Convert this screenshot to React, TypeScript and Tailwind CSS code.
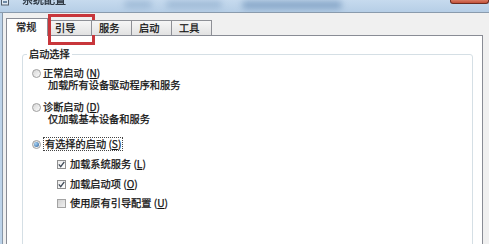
import React from "react";

const tabs = [
  { label: "常规", w: "w-[42px]" },
  { label: "引导", w: "w-[45px]" },
  { label: "服务", w: "w-[41px]" },
  { label: "启动", w: "w-[41px]" },
  { label: "工具", w: "w-[41px]" },
];

function Radio({ checked }: { checked?: boolean }) {
  return (
    <span className="flex h-[9px] w-[9px] shrink-0 items-center justify-center rounded-full border border-[#a0a0a0] bg-linear-to-br from-[#d6d6d6] to-[#fbfbfb]">
      {checked && (
        <span className="h-[5px] w-[5px] rounded-full bg-[radial-gradient(circle_at_35%_35%,#a8d4f6,#2a5e98)]" />
      )}
    </span>
  );
}

function Check({ checked }: { checked?: boolean }) {
  return (
    <span
      className={
        checked
          ? "flex h-[9px] w-[9px] shrink-0 items-center justify-center border border-[#8f8f8f] bg-linear-to-br from-[#ececec] to-white"
          : "flex h-[9px] w-[9px] shrink-0 border border-[#a3a3a3] bg-linear-to-br from-[#d2d2d2] to-[#f0f0f0]"
      }
    >
      {checked && (
        <svg width="7" height="7" viewBox="0 0 7 7">
          <path d="M0.8 3.4 L2.7 5.6 L6.3 0.9" fill="none" stroke="#3f4a57" strokeWidth="1.3" />
        </svg>
      )}
    </span>
  );
}

export default function App() {
  return (
    <div className="flex h-[244px] w-[489px] flex-col overflow-hidden bg-[#f0f0f0] font-['Noto_Sans_CJK_SC','Liberation_Sans',sans-serif] text-[10.2px] text-[#111] [-webkit-text-stroke:0.25px_#111]">
      {/* title bar */}
      <div className="flex h-[13px] shrink-0 items-start overflow-hidden border-b border-[#8a9bad] bg-linear-to-b from-[#c6daee] to-[#b6cee6]">
        <svg width="9" height="6" viewBox="0 0 9 6" className="ml-[1px] shrink-0">
          <rect x="0.5" y="-3" width="7" height="8" fill="#dfe9f3" stroke="#56606c" />
          <rect x="2" y="1" width="4" height="2" fill="#6f8aa6" />
        </svg>
        <span className="-mt-[7px] ml-[12px] text-[11px] leading-[12px] text-[#2a3a4c] blur-[0.4px]">系统配置</span>
        <div className="ml-[58px] mt-[1px] h-[7px] w-[28px] rounded-full bg-[#87a7c8] opacity-60 blur-[3px]" />
        <div className="ml-[14px] mt-[1px] h-[7px] w-[56px] rounded-full bg-[#86a6c7] opacity-60 blur-[3px]" />
        <div className="ml-[20px] mt-[1px] h-[8px] w-[100px] rounded-full bg-[#6f93ba] opacity-70 blur-[3px]" />
        <div className="ml-auto h-[4px] w-[39px] rounded-b-[3px] border border-t-0 border-[#6d2c20] bg-linear-to-b from-[#d77a62] to-[#c2503a]" />
      </div>

      {/* body */}
      <div className="flex flex-1">
        <div className="w-[2px] bg-[#bdd3e9]" />
        <div className="w-px bg-[#8797a8]" />
        <div className="flex flex-1 flex-col pl-[3px] pr-[6px] pt-[5px]">
          {/* tabs */}
          <div className="relative z-10 flex items-end">
            {tabs.map((t, i) =>
              i === 0 ? (
                <div
                  key={t.label}
                  className={`-mb-px flex h-[18px] ${t.w} items-center border border-b-0 border-[#898c95] bg-white pb-[2px] pl-[9px] leading-[12px]`}
                >
                  {t.label}
                </div>
              ) : (
                <div
                  key={t.label}
                  className={`relative -ml-px flex h-[15px] ${t.w} items-center border border-b-0 border-[#8e9096] bg-linear-to-b from-[#f6f6f6] to-[#e2e2e2] pl-[7px] leading-[12px]`}
                >
                  {t.label}
                  {i === 1 && (
                    <div className="absolute -top-[7px] left-0 h-[31px] w-[47px] border-[3px] border-[#c8363b]" />
                  )}
                </div>
              )
            )}
          </div>

          {/* panel */}
          <div className="flex-1 border border-b-0 border-[#898c95] bg-white pr-[9px] pl-[15px] pt-[12px]">
            <fieldset className="h-[220px] rounded-[3px] border border-[#d5dfe5]">
              <legend className="ml-[4px] px-[2px] leading-[12px]">启动选择</legend>
              <div className="flex flex-col pl-[9px] pt-[7px] leading-[12px]">
                <div className="flex items-center gap-[2px]">
                  <Radio />
                  <span>
                    正常启动 (<u>N</u>)
                  </span>
                </div>
                <div className="pl-[16px]">加载所有设备驱动程序和服务</div>

                <div className="mt-[10px] flex items-center gap-[2px]">
                  <Radio />
                  <span>
                    诊断启动 (<u>D</u>)
                  </span>
                </div>
                <div className="pl-[16px]">仅加载基本设备和服务</div>

                <div className="mt-[12px] flex items-center gap-[2px]">
                  <Radio checked />
                  <span className="border border-dotted border-[#444] px-px">
                    有选择的启动 (<u>S</u>)
                  </span>
                </div>

                <div className="mt-[7px] flex items-center gap-[4px] pl-[25px]">
                  <Check checked />
                  <span>
                    加载系统服务 (<u>L</u>)
                  </span>
                </div>
                <div className="mt-[8px] flex items-center gap-[4px] pl-[25px]">
                  <Check checked />
                  <span>
                    加载启动项 (<u>O</u>)
                  </span>
                </div>
                <div className="mt-[7px] flex items-center gap-[4px] pl-[25px]">
                  <Check />
                  <span>
                    使用原有引导配置 (<u>U</u>)
                  </span>
                </div>
              </div>
            </fieldset>
          </div>
        </div>
      </div>
    </div>
  );
}
